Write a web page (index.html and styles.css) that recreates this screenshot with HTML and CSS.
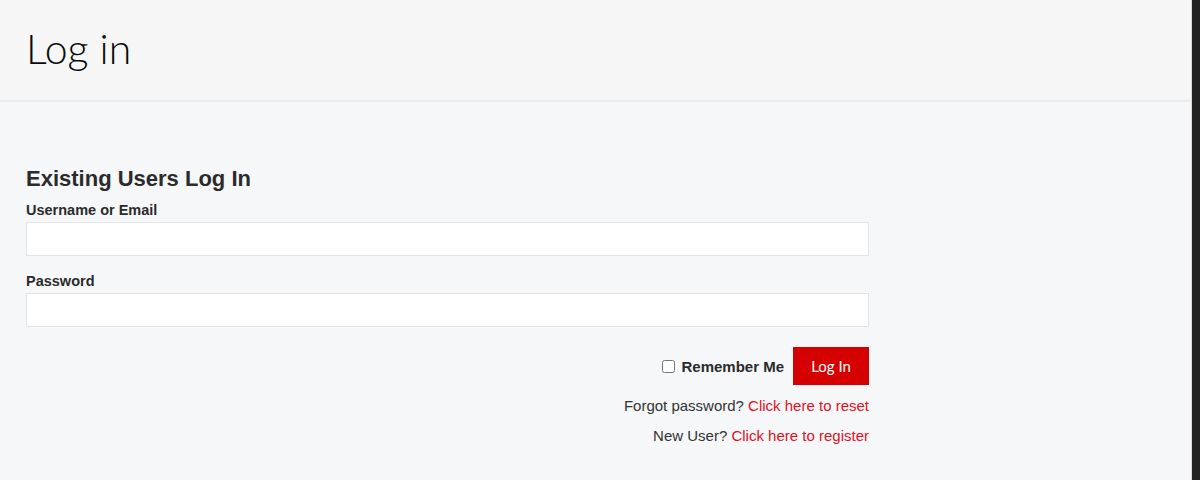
FILE: index.html
```html
<!DOCTYPE html>
<html>
<head>
<meta charset="utf-8">
<link rel="stylesheet" href="styles.css">
</head>
<body>
<div class="frame">
  <div class="page">
    <header class="page-header">
      <h1 class="page-title">Log in</h1>
    </header>
    <main class="content">
      <form class="login-form">
        <h2 class="form-title">Existing Users Log In</h2>
        <div class="field">
          <label class="field-label">Username or Email</label>
          <input class="field-input" type="text">
        </div>
        <div class="field">
          <label class="field-label">Password</label>
          <input class="field-input" type="password">
        </div>
        <div class="actions">
          <label class="remember"><input type="checkbox" class="remember-box"> Remember Me</label>
          <button type="button" class="submit">Log In</button>
        </div>
        <p class="link-line">Forgot password? <a href="#" class="link">Click here to reset</a></p>
        <p class="link-line">New User? <a href="#" class="link">Click here to register</a></p>
      </form>
    </main>
  </div>
  <div class="scrollbar"></div>
</div>
</body>
</html>
```
FILE: styles.css
```css
html, body {
  margin: 0;
  padding: 0;
  height: 100%;
}
body {
  font-family: "Liberation Sans", Arial, sans-serif;
  color: #333;
  background: #f6f7f9;
}
.frame {
  display: flex;
  height: 100%;
}
.page {
  flex: 1;
  display: flex;
  flex-direction: column;
  border-right: 1px solid #d9d9d9;
}
.scrollbar {
  width: 8px;
  background: #222222;
}
.page-header {
  background: #f6f6f6;
  border-bottom: 2px solid #ececec;
  height: 100px;
  padding: 0 26px;
  display: flex;
  align-items: center;
}
.page-title {
  margin: 0;
  font-family: Lato, sans-serif;
  font-weight: 300;
  font-size: 41px;
  color: #0a0a0a;
  padding-bottom: 3px;
}
.content {
  flex: 1;
  background: #f6f7f9;
  padding: 63px 26px 0;
}
.login-form {
  width: 843px;
  display: flex;
  flex-direction: column;
}
.form-title {
  margin: 0 0 8px;
  font-size: 22px;
  font-weight: bold;
  color: #2b2b2b;
  line-height: 28px;
}
.field {
  display: flex;
  flex-direction: column;
  margin-bottom: 16px;
}
.field-label {
  font-size: 14.5px;
  font-weight: bold;
  color: #2b2b2b;
  line-height: 18px;
  margin-bottom: 3px;
}
.field-input {
  height: 34px;
  box-sizing: border-box;
  border: 1px solid #e4e4e4;
  background: #fff;
  margin: 0;
  padding: 0 8px;
  font-size: 15px;
}
.actions {
  display: flex;
  justify-content: flex-end;
  align-items: center;
  margin-top: 4px;
  gap: 9px;
}
.remember {
  display: flex;
  align-items: center;
  font-size: 15px;
  font-weight: bold;
  color: #2b2b2b;
}
.remember-box {
  margin: 0 6px 0 0;
  width: 13px;
  height: 13px;
}
.submit {
  background: #d50000;
  color: #fff;
  border: none;
  height: 38px;
  width: 76px;
  font-family: Lato, sans-serif;
  font-size: 15px;
  padding: 0;
}
.link-line {
  margin: 0;
  text-align: right;
  font-size: 15px;
  line-height: 30px;
  color: #333;
}
.link-line:first-of-type {
  margin-top: 6px;
}
.link {
  color: #e0101d;
  text-decoration: none;
}
```
